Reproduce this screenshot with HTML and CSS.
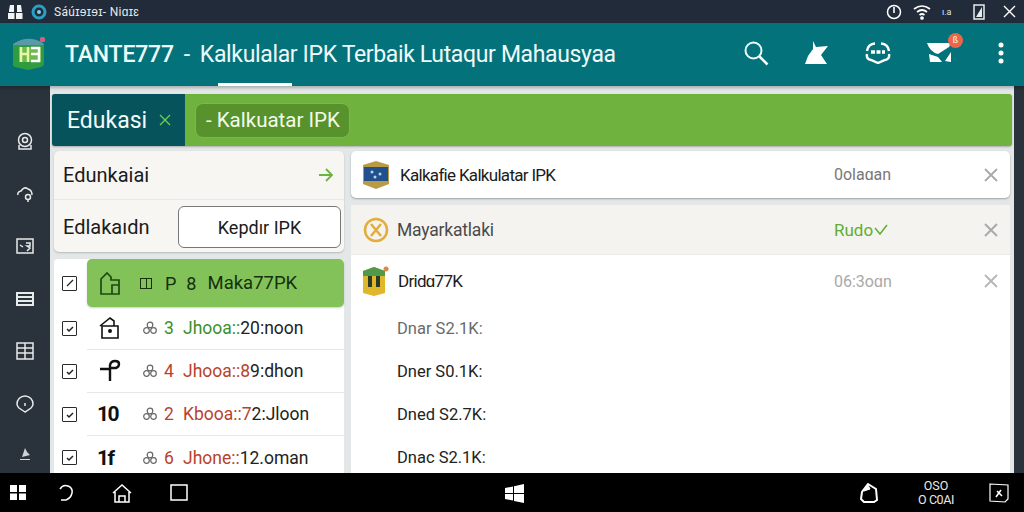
FILE: index.html
```html
<!DOCTYPE html>
<html lang="en">
<head>
  <meta charset="UTF-8" />
  <title>TANTE777 - Kalkulator IPK</title>
  <link rel="stylesheet" href="styles.css">
</head>
<body>
  <div class="status-bar">
    <svg width="15" height="16" viewBox="0 0 15 16"><path d="M1 6l1-5h4v7H1zM9 1h4l1 7H9zM0 9h6.500v6H0zM8 9h6.500v6H8z" fill="#f1f3f3"/></svg>
    <svg class="st-gap" width="16" height="16" viewBox="0 0 16 16"><circle cx="8" cy="8" r="6" fill="none" stroke="#2a9fc4" stroke-width="3"/><circle cx="8" cy="8" r="2" fill="#7fd0e6"/></svg>
    <span class="st-title">Sáúɪɘɪɘɪ- Niɑɪɛ</span>
    <span class="spacer"></span>
    <svg width="16" height="16" viewBox="0 0 16 16"><circle cx="8" cy="8" r="6.500" fill="none" stroke="#fff" stroke-width="1.500"/><path d="M8 3v6" stroke="#fff" stroke-width="1.600"/></svg>
    <svg width="18" height="16" viewBox="0 0 18 16" fill="none" stroke="#fff" stroke-width="1.700"><path d="M1 5q8-6 16 0M4 8q5-4 10 0M6.500 11q2.500-2 5 0"/><circle cx="9" cy="14" r="1" fill="#fff"/></svg>
    <span class="st-small">ı.a</span>
    <svg width="12" height="16" viewBox="0 0 12 16"><path d="M1 1h10v14H1z" fill="none" stroke="#e9ecec" stroke-width="1.500"/><path d="M3 13L9 3v10z" fill="#e9ecec"/></svg>
    <svg class="close" width="13" height="13" viewBox="0 0 13 13"><path d="M1 1l11 11M12 1L1 12" stroke="#fff" stroke-width="1.400"/></svg>
  </div>

  <header class="app-bar">
    <svg class="logo" width="34" height="36" viewBox="0 0 34 36">
      <path d="M1 9h31v19q0 3-3 4l-13 3-13-3q-3-1-2-4z" fill="#2f9d3f"/>
      <path d="M1 9Q16-1 31 8l1 2H1z" fill="#5b98a8"/>
      <rect x="28" y="2" width="5" height="5" rx="1.500" fill="#d0637c"/>
      <rect x="7" y="12" width="22" height="15" fill="#6dbb4a"/>
      <path d="M9 12v15M16 12v15M9 19h7" stroke="#eaf7a6" stroke-width="2.500" fill="none"/>
      <path d="M19 13h8v13h-8M19 19h8" stroke="#fff" stroke-width="2.500" fill="none"/>
    </svg>
    <h1 class="app-title"><b>TANTE777</b><span class="title-dash">-</span>Kalkulalar IPK Terbaik Lutaqur Mahausyaa</h1>
    <span class="app-underline"></span>
    <div class="app-actions">
      <svg width="26" height="26" viewBox="0 0 26 26" fill="none" stroke="#f2fbfb" stroke-width="2"><circle cx="10.500" cy="10.500" r="8"/><path d="M16.500 16.500l8 8" stroke-width="2.500"/></svg>
      <svg width="24" height="24" viewBox="0 0 24 24" fill="#fff"><path d="M8 0l3 6 12-1-7 9 6 9H0l3-8 5-7z"/></svg>
      <svg width="26" height="22" viewBox="0 0 26 22" fill="none" stroke="#fff" stroke-width="2.400"><path d="M10 1.500Q3 2 2 9M16 1.500Q23 2 24 9M2 12q-1 5 4 6l7 3 7-3q5-1 4-6"/><path d="M6 10h14" stroke-width="3.500" stroke-dasharray="4 1.500"/></svg>
      <span class="mail">
        <svg width="25" height="21" viewBox="0 0 25 21" fill="#fff"><path d="M0 1h24l-2 4-11 7Q3 10 0 1zM2 12l9 3 4 5H3zM18 19l6-9v10z"/></svg>
        <span class="mail-badge">ß</span>
      </span>
      <svg class="more" width="6" height="22" viewBox="0 0 6 22" fill="#fff"><circle cx="3" cy="3" r="2.500"/><circle cx="3" cy="11" r="2.500"/><circle cx="3" cy="19" r="2.500"/></svg>
    </div>
  </header>

  <div class="main">
    <nav class="side">
      <svg width="18" height="18" viewBox="0 0 18 18" fill="none" stroke="#e7eaea" stroke-width="1.500"><circle cx="9" cy="8" r="6.500"/><circle cx="9" cy="8" r="2.500"/><path d="M3 13v4h12v-4"/></svg>
      <svg width="18" height="18" viewBox="0 0 18 18" fill="none" stroke="#e7eaea" stroke-width="1.500"><path d="M2 10q-1-3 3-4 3-5 7-2 4 1 4 6"/><circle cx="12" cy="12" r="2.500"/><path d="M12 15v2"/></svg>
      <svg width="18" height="18" viewBox="0 0 18 18" fill="none" stroke="#e7eaea" stroke-width="1.500"><path d="M1 2h16v14H1z"/><path d="M4 8l3 2M10 6h4v3h-3l3 2-3 3"/></svg>
      <svg width="18" height="18" viewBox="0 0 18 18" fill="none" stroke="#e7eaea" stroke-width="2"><path d="M1 3h16v12H1zM1 7h16M1 11h16"/></svg>
      <svg width="18" height="18" viewBox="0 0 18 18" fill="none" stroke="#e7eaea" stroke-width="1.500"><path d="M1 1h16v16H1zM9 1v16M1 6h16M1 11h16"/></svg>
      <svg width="18" height="18" viewBox="0 0 18 18" fill="none" stroke="#e7eaea" stroke-width="1.500"><path d="M9 17L3 13Q1 11 1 9a8 8 0 0 1 16 0q0 2-2 4z"/><path d="M9 8v3"/></svg>
      <svg width="14" height="14" viewBox="0 0 14 14" fill="#cfd4d4"><path d="M7 1l2 4 3 3-8 2zM2 12h10v1H2z"/></svg>
    </nav>

    <div class="content">
      <div class="tab-bar">
        <div class="tab-active">
          <span>Edukasi</span>
          <svg width="12" height="12" viewBox="0 0 12 12"><path d="M1 1l10 10M11 1L1 11" stroke="#6fcf4f" stroke-width="1.300"/></svg>
        </div>
        <div class="tab-chip">- Kalkuatar IPK</div>
      </div>

      <div class="panels">
        <div class="left">
          <div class="filter-card">
            <div class="filter-row">
              <span>Edunkaiai</span>
              <svg width="16" height="14" viewBox="0 0 16 14" fill="none" stroke="#6cb33f" stroke-width="1.800"><path d="M1 7h13M8 1l6 6-6 6"/></svg>
            </div>
            <div class="filter-row filter-row-two">
              <span>Edlakaıdn</span>
              <div class="filter-btn">Kepdır IPK</div>
            </div>
          </div>

          <div class="list">
            <div class="list-row">
              <span class="check"><svg width="10" height="10" viewBox="0 0 10 10"><path d="M2 8l6-6" stroke="#222" stroke-width="1.200"/></svg></span>
              <div class="row-main row-selected">
                <svg class="row-icon" width="22" height="24" viewBox="0 0 22 24" fill="none" stroke="#1c4a12" stroke-width="1.700"><path d="M2 23V8l6-6 4 4v3h8v14zM13 23v-9h7"/></svg>
                <span class="sel-box"></span>
                <span class="sel-p">P</span>
                <span class="sel-s">8</span>
                <span class="sel-name">Maka77PK</span>
              </div>
            </div>
            <div class="list-row">
              <span class="check"><svg width="10" height="10" viewBox="0 0 10 10"><path d="M2 5l2 2 4-4" fill="none" stroke="#222" stroke-width="1.500"/></svg></span>
              <div class="row-main row-line">
                <svg class="row-icon" width="22" height="24" viewBox="0 0 22 24" fill="none" stroke="#111" stroke-width="1.600"><path d="M1 10l10-8 4 3v5M3 10h16v12H3z"/><circle cx="11" cy="15" r="1.200" fill="#111"/></svg>
                <svg class="row-glyph" width="14" height="14" viewBox="0 0 14 14" fill="none" stroke="#666" stroke-width="1.200"><circle cx="7" cy="4" r="2.800"/><circle cx="3.500" cy="9.500" r="2.800"/><circle cx="10.500" cy="9.500" r="2.800"/></svg>
                <span class="row-num num-green">3</span>
                <span class="row-txt"><span class="txt-green">Jhooa::</span>20:noon</span>
              </div>
            </div>
            <div class="list-row">
              <span class="check"><svg width="10" height="10" viewBox="0 0 10 10"><path d="M2 5l2 2 4-4" fill="none" stroke="#222" stroke-width="1.500"/></svg></span>
              <div class="row-main row-line">
                <svg class="row-icon" width="22" height="24" viewBox="0 0 22 24" fill="none" stroke="#111" stroke-width="2.400"><path d="M1 10h11M11 22V6q1-4 5-4t4 3-3 4h-5"/></svg>
                <svg class="row-glyph" width="14" height="14" viewBox="0 0 14 14" fill="none" stroke="#666" stroke-width="1.200"><circle cx="7" cy="4" r="2.800"/><circle cx="3.500" cy="9.500" r="2.800"/><circle cx="10.500" cy="9.500" r="2.800"/></svg>
                <span class="row-num num-red">4</span>
                <span class="row-txt"><span class="txt-red">Jhooa::8</span>9:dhon</span>
              </div>
            </div>
            <div class="list-row">
              <span class="check"><svg width="10" height="10" viewBox="0 0 10 10"><path d="M2 5l2 2 4-4" fill="none" stroke="#222" stroke-width="1.500"/></svg></span>
              <div class="row-main row-line">
                <span class="row-icon row-code">10</span>
                <svg class="row-glyph" width="14" height="14" viewBox="0 0 14 14" fill="none" stroke="#666" stroke-width="1.200"><circle cx="7" cy="4" r="2.800"/><circle cx="3.500" cy="9.500" r="2.800"/><circle cx="10.500" cy="9.500" r="2.800"/></svg>
                <span class="row-num num-red">2</span>
                <span class="row-txt"><span class="txt-red">Kbooa::7</span>2:Jloon</span>
              </div>
            </div>
            <div class="list-row">
              <span class="check"><svg width="10" height="10" viewBox="0 0 10 10"><path d="M2 5l2 2 4-4" fill="none" stroke="#222" stroke-width="1.500"/></svg></span>
              <div class="row-main">
                <span class="row-icon row-code">1f</span>
                <svg class="row-glyph" width="14" height="14" viewBox="0 0 14 14" fill="none" stroke="#666" stroke-width="1.200"><circle cx="7" cy="4" r="2.800"/><circle cx="3.500" cy="9.500" r="2.800"/><circle cx="10.500" cy="9.500" r="2.800"/></svg>
                <span class="row-num num-red">6</span>
                <span class="row-txt"><span class="txt-red">Jhone::</span>12.oman</span>
              </div>
            </div>
          </div>
        </div>

        <div class="right">
          <div class="res-card">
            <svg class="res-icon" width="30" height="32" viewBox="0 0 30 32"><path d="M2 6l13-4 13 4v19l-13 5-13-5z" fill="#bb9a45"/><path d="M3 8h24v14H3z" fill="#21508f"/><circle cx="11" cy="13" r="1.500" fill="#b8d6e8"/><circle cx="19" cy="15" r="1.500" fill="#b8d6e8"/><circle cx="14" cy="18" r="1.500" fill="#b8d6e8"/></svg>
            <span class="res-name">Kalkafie Kalkulatar IPK</span>
            <span class="res-status">0olaɑan</span>
            <svg class="res-x" width="14" height="14" viewBox="0 0 14 14"><path d="M1 1l12 12M13 1L1 13" stroke="#a7a9a9" stroke-width="1.800"/></svg>
          </div>
          <div class="res-list">
            <div class="res-row res-row-grey">
              <svg class="res-icon" width="30" height="30" viewBox="0 0 30 30" fill="none" stroke="#e2ad3a"><circle cx="15" cy="15" r="11" stroke-width="2.500"/><path d="M10 9l10 12M20 9L10 21" stroke-width="2.500"/></svg>
              <span class="res-name res-name-soft">Mayarkatlaki</span>
              <span class="res-status res-ok">Rudo<svg width="14" height="11" viewBox="0 0 14 11" fill="none" stroke="#5fae2f" stroke-width="1.500"><path d="M1 4l5 6 7-9"/></svg></span>
              <svg class="res-x" width="14" height="14" viewBox="0 0 14 14"><path d="M1 1l12 12M13 1L1 13" stroke="#a7a9a9" stroke-width="1.800"/></svg>
            </div>
            <div class="res-row">
              <svg class="res-icon" width="28" height="32" viewBox="0 0 28 32"><path d="M2 6l11-4 11 4v22l-11 3-11-3z" fill="#e0b62a"/><path d="M2 6l11-4 11 4v5H2z" fill="#4e9a48"/><path d="M7 11h4v11H7zM15 11h4v11h-4z" fill="#2e3b24"/><circle cx="25" cy="4" r="2.500" fill="#d98a4a"/></svg>
              <span class="res-name">Dridɑ77K</span>
              <span class="res-status res-faint">06:3oɑn</span>
              <svg class="res-x" width="14" height="14" viewBox="0 0 14 14"><path d="M1 1l12 12M13 1L1 13" stroke="#b4b6b6" stroke-width="1.800"/></svg>
            </div>
            <div class="amount amount-faint">Dnar S2.1K:</div>
            <div class="amount">Dner S0.1K:</div>
            <div class="amount">Dned S2.7K:</div>
            <div class="amount">Dnac S2.1K:</div>
          </div>
        </div>
      </div>
    </div>
  </div>

  <footer class="task-bar">
    <div class="task-left">
      <svg class="task-start" width="16" height="15" viewBox="0 0 16 15" fill="#fff"><path d="M0 0h7v7H0zM9 0h7v7H9zM0 8.500h7V15H0zM9 8.500h7V15H9z"/></svg>
      <svg width="16" height="18" viewBox="0 0 16 18" fill="none" stroke="#fff" stroke-width="1.500"><path d="M2 5q3-5 8-3t4 7-6 7H3"/></svg>
      <svg width="20" height="20" viewBox="0 0 20 20" fill="none" stroke="#fff" stroke-width="1.500"><path d="M1 10l9-8 9 8M3 9v10h14V9M7 19v-6h6v6"/></svg>
      <svg width="18" height="17" viewBox="0 0 18 17" fill="none" stroke="#fff" stroke-width="1.500"><path d="M1 1h16v15H1z"/></svg>
    </div>
    <svg class="task-win" width="19" height="19" viewBox="0 0 19 19" fill="#fff"><path d="M0 4l8-1.500V9H0zM9 2.300L19 0v9H9zM0 10h8v6.500L0 15zM9 10h10v9L9 17z"/></svg>
    <div class="task-right">
      <svg class="task-shape" width="18" height="20" viewBox="0 0 18 20" fill="none" stroke="#fff" stroke-width="2"><path d="M8 1l8 5 1 11-3 2H4l-3-3 1-7z"/><path d="M8 2l2 4-6 2z" fill="#fff" stroke-width="1"/></svg>
      <div class="clock"><span>OSO</span><span class="clock-low">O C0AI</span></div>
      <svg width="20" height="20" viewBox="0 0 20 20" fill="none" stroke="#fff" stroke-width="1.200"><path d="M1 1l18 1v14l-3 3-15-1z"/><path d="M8 8l5 5M12 7l-5 7" stroke-width="1.600"/></svg>
    </div>
  </footer>
</body>
</html>
```

FILE: styles.css
```css
* {
  box-sizing: border-box;
  margin: 0;
  padding: 0;
}
body {
  width: 1024px;
  height: 512px;
  overflow: hidden;
  display: flex;
  flex-direction: column;
  font-family: Roboto, "Liberation Sans", sans-serif;
  background-color: #2a333c;
  color: #1b1b1b;
}
.spacer {
  flex: 1;
}

/* STATUS BAR */
.status-bar {
  height: 23px;
  display: flex;
  align-items: center;
  padding: 0 8px;
  background-color: #222b39;
  color: #e6e9ea;
  gap: 11px;
}
.st-gap {
  margin-left: -3px;
}
.st-title {
  margin-left: -4px;
  font-size: 12px;
  letter-spacing: 0.3px;
}
.st-small {
  width: 14px;
  margin-right: 6px;
  font-size: 9px;
}
.close {
  margin-left: 7px;
}

/* APP BAR */
.app-bar {
  position: relative;
  height: 63px;
  display: flex;
  align-items: center;
  padding: 0 20px 4px 12px;
  background-color: #04727a;
  box-shadow: 0 2px 3px rgba(0, 0, 0, 0.25);
  z-index: 1;
}
.app-title {
  margin: 3px 0 0 19px;
  font-size: 23px;
  font-weight: 400;
  letter-spacing: -0.35px;
  color: #eefbfa;
  white-space: nowrap;
}
.app-title b {
  font-weight: 500;
  letter-spacing: -0.2px;
}
.title-dash {
  margin: 0 10px;
}
.app-underline {
  position: absolute;
  left: 218px;
  bottom: 0;
  width: 74px;
  height: 3px;
  background-color: #fff;
}
.app-actions {
  margin-left: auto;
  display: flex;
  align-items: center;
  gap: 36px;
}
.mail {
  position: relative;
  display: flex;
}
.mail-badge {
  position: absolute;
  top: -9px;
  right: -11px;
  width: 15px;
  height: 15px;
  border-radius: 50%;
  background-color: #e8674a;
  color: #ffe;
  font-size: 9px;
  line-height: 15px;
  text-align: center;
}
.more {
  margin-left: 10px;
}

/* MAIN AREA */
.main {
  flex: 1;
  display: flex;
  min-height: 0;
}
.side {
  width: 50px;
  display: flex;
  flex-direction: column;
  align-items: center;
  padding-top: 46px;
  gap: 34.5px;
  flex-shrink: 0;
}
.content {
  width: 964px;
  background-color: #e3e7e7;
  padding: 8px 2px 0 2px;
  display: flex;
  flex-direction: column;
  min-height: 0;
}

/* TABS */
.tab-bar {
  height: 52px;
  display: flex;
  align-items: center;
  background-color: #6fb23e;
  border-radius: 3px;
  box-shadow: 0 1px 2px rgba(0, 0, 0, 0.25);
  overflow: hidden;
  flex-shrink: 0;
}
.tab-active {
  width: 133px;
  height: 100%;
  display: flex;
  align-items: center;
  gap: 12px;
  padding-left: 15px;
  background-color: #07535c;
  color: #f2fbf8;
  font-size: 23px;
}
.tab-chip {
  margin-left: 10px;
  width: 155px;
  height: 35px;
  display: flex;
  align-items: center;
  padding-left: 10px;
  border: 1px solid #7eb550;
  border-radius: 8px;
  background-color: #57922c;
  color: #f3fbe8;
  font-size: 20.5px;
}

/* PANELS */
.panels {
  flex: 1;
  display: flex;
  gap: 7px;
  padding: 5px 0 0 2px;
  min-height: 0;
}
.left {
  width: 290px;
  display: flex;
  flex-direction: column;
  gap: 7px;
  flex-shrink: 0;
}
.filter-card {
  height: 101px;
  background-color: #f7f6f3;
  border-radius: 5px;
  box-shadow: 0 1px 2px rgba(0, 0, 0, 0.2);
  flex-shrink: 0;
}
.filter-row {
  height: 49px;
  display: flex;
  align-items: center;
  justify-content: space-between;
  padding: 0 10px 0 9px;
  border-bottom: 1px solid #e9e8e5;
  font-size: 20px;
}
.filter-row-two {
  height: 52px;
  padding: 2px 3px 0 9px;
  border-bottom: none;
}
.filter-btn {
  width: 163px;
  height: 42px;
  display: flex;
  align-items: center;
  justify-content: center;
  background-color: #fff;
  border: 1px solid #777;
  border-radius: 6px;
  font-size: 18px;
}

/* LIST */
.list {
  flex: 1;
  background-color: #fff;
  border-radius: 4px 4px 0 0;
  min-height: 0;
}
.list-row {
  display: flex;
  align-items: center;
  height: 43px;
}
.list-row:first-child {
  height: 48px;
}
.check {
  width: 15px;
  height: 15px;
  margin: 0 10px 0 8px;
  display: flex;
  align-items: center;
  justify-content: center;
  border: 1.5px solid #2a2a2a;
  border-radius: 1px;
  flex-shrink: 0;
}
.row-main {
  width: 257px;
  height: 100%;
  display: flex;
  align-items: center;
  padding-left: 12px;
  font-size: 18px;
}
.row-selected {
  background-color: #83c259;
  border-radius: 5px;
  color: #14310c;
  box-shadow: 0 1px 2px rgba(0, 0, 0, 0.2);
}
.row-line {
  border-bottom: 1px solid #e6e8e8;
}
.row-icon {
  width: 22px;
  flex-shrink: 0;
}
.row-code {
  margin-left: -2px;
  font-size: 21px;
  font-weight: 700;
  letter-spacing: -1.5px;
  color: #111;
  line-height: 24px;
}
.sel-box {
  width: 12px;
  height: 11px;
  margin-left: 19px;
  border: 1.5px solid #14310c;
  background: linear-gradient(90deg, transparent 45%, #14310c 45%, #14310c 55%, transparent 55%);
}
.sel-p {
  margin-left: 13px;
}
.sel-s {
  margin: 0 11px 0 10px;
}
.sel-name {
  font-size: 18.5px;
}
.row-glyph {
  margin-left: 22px;
  flex-shrink: 0;
}
.row-code + .row-glyph {
  margin-left: 24px;
}
.row-num {
  width: 19px;
  margin-left: 7px;
  font-size: 17.5px;
}
.row-txt {
  font-size: 17.5px;
  color: #222;
  white-space: nowrap;
}
.num-green,
.txt-green {
  color: #3c8f2b;
}
.num-red,
.txt-red {
  color: #b8432c;
}

/* RIGHT PANEL */
.right {
  width: 659px;
  display: flex;
  flex-direction: column;
  gap: 7px;
  flex-shrink: 0;
}
.res-card {
  height: 47px;
  display: flex;
  align-items: center;
  padding: 0 12px 0 10px;
  background-color: #fff;
  border-radius: 5px;
  box-shadow: 0 1px 2px rgba(0, 0, 0, 0.3);
  flex-shrink: 0;
}
.res-list {
  flex: 1;
  background-color: #fff;
  border-radius: 4px 4px 0 0;
  min-height: 0;
}
.res-row {
  height: 52px;
  display: flex;
  align-items: center;
  padding: 0 12px 0 10px;
}
.res-row-grey {
  height: 50px;
  background-color: #f4f3f0;
  border-bottom: 1px solid #ecebe8;
}
.res-icon {
  flex-shrink: 0;
}
.res-name {
  margin-left: 9px;
  font-size: 17px;
  letter-spacing: -0.7px;
}
.res-name-soft {
  margin-left: 6px;
  font-size: 17.5px;
  letter-spacing: -0.2px;
  color: #4a4a4a;
}
.res-status {
  position: absolute;
  left: 834px;
  font-size: 16px;
  color: #777;
}
.res-ok {
  display: flex;
  align-items: center;
  gap: 1px;
  font-size: 17px;
  color: #5fae2f;
}
.res-faint {
  color: #a9a9a9;
}
.res-x {
  margin-left: auto;
}
.amount {
  height: 43px;
  display: flex;
  align-items: center;
  padding-left: 46px;
  font-size: 16.5px;
  color: #222;
}
.amount-faint {
  color: #6a6a6a;
}

/* TASK BAR */
.task-bar {
  height: 39px;
  position: relative;
  display: flex;
  align-items: center;
  justify-content: space-between;
  padding: 0 15px 0 10px;
  background-color: #000;
  flex-shrink: 0;
}
.task-left,
.task-right {
  display: flex;
  align-items: center;
}
.task-left {
  gap: 38px;
}
.task-start {
  margin-right: -6px;
}
.task-win {
  position: absolute;
  left: 505px;
  top: 11px;
}
.task-right {
  gap: 35px;
}
.task-shape {
  margin-right: 5px;
}
.clock {
  display: flex;
  flex-direction: column;
  align-items: center;
  font-size: 12.5px;
  line-height: 14px;
  color: #e8e8e8;
}
.clock-low {
  letter-spacing: -0.4px;
}
```
